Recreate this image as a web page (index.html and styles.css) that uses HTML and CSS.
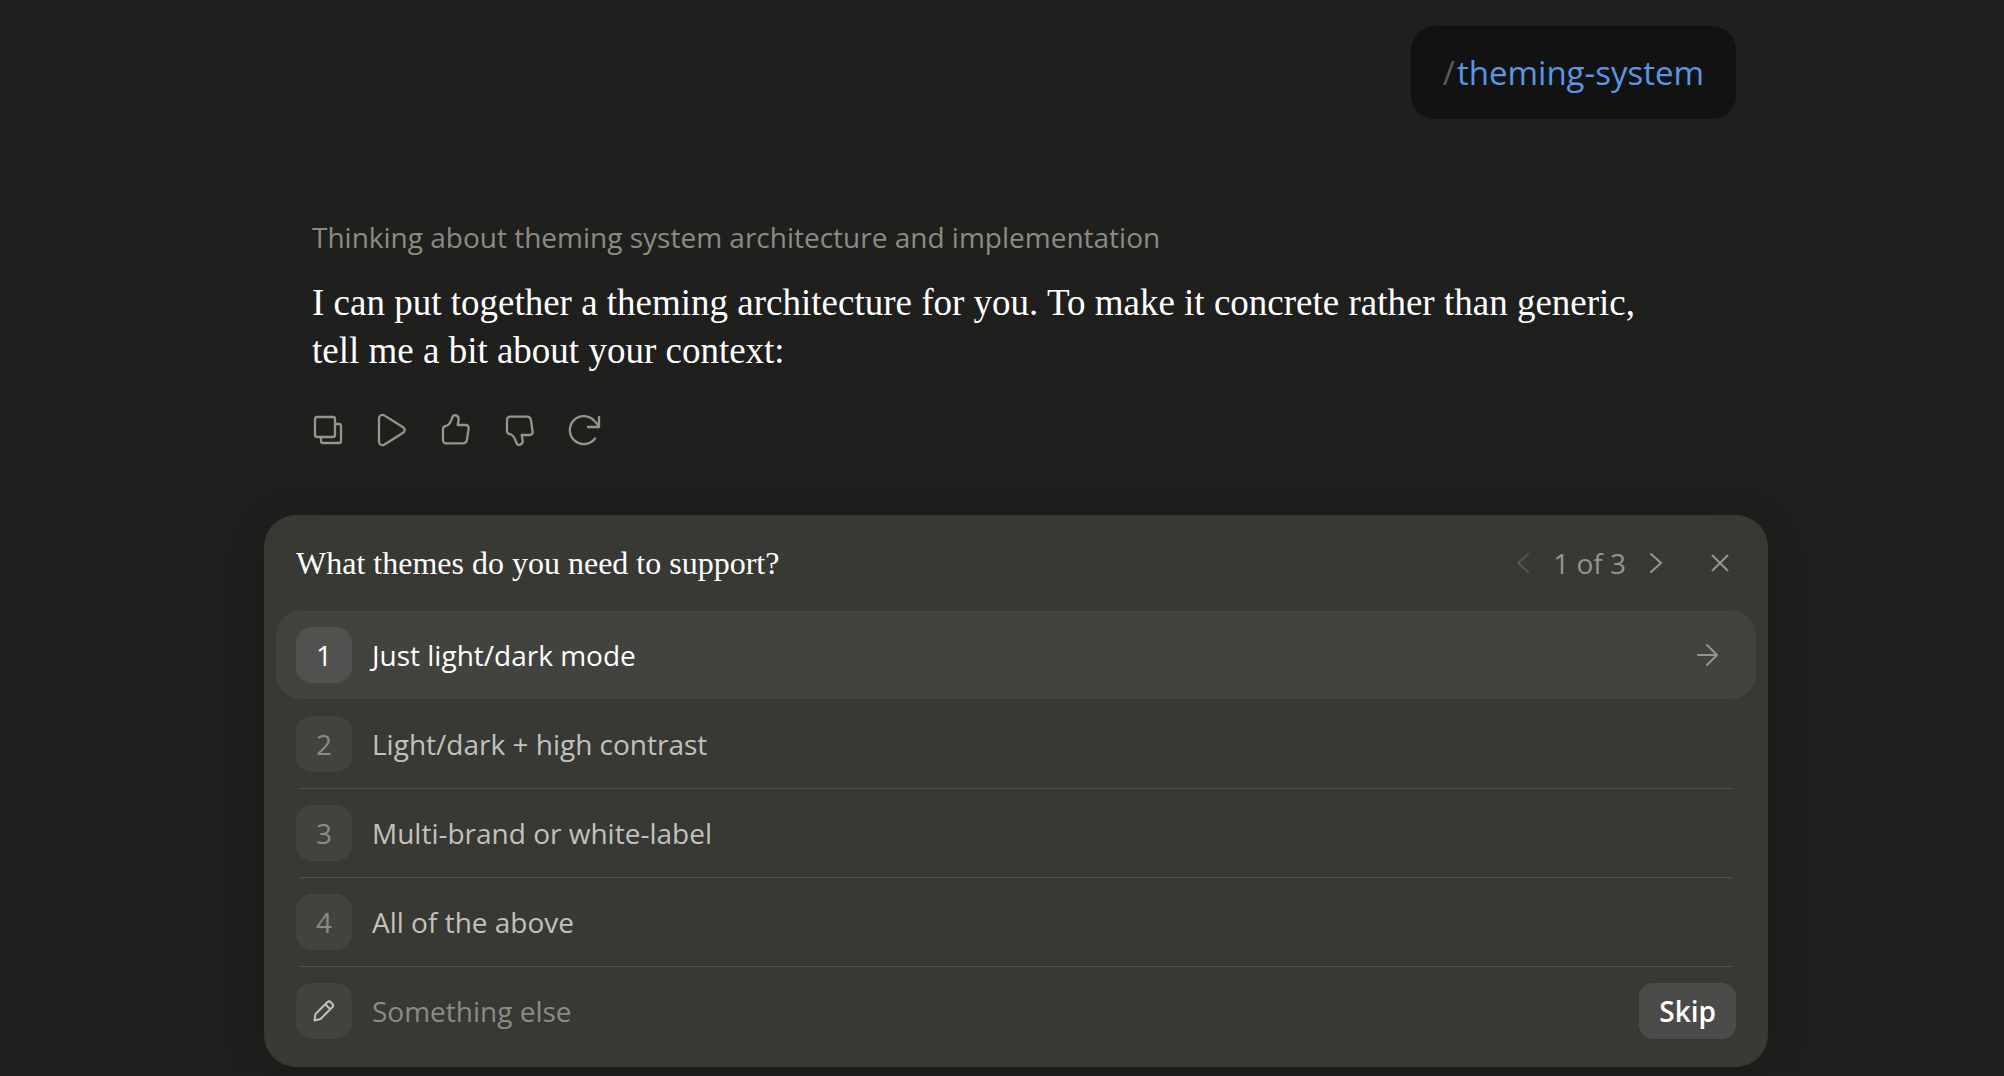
FILE: index.html
```html
<!doctype html>
<html lang="en">

<head>
<meta charset="utf-8" />
<meta name="viewport" content="width=device-width, initial-scale=1" />
<title>Theming system</title>
<link rel="stylesheet" href="styles.css">
</head>

<body>

<main class="chat">
	<div class="message-user"><span class="slash">/</span><span class="command">theming-system</span></div>

	<article class="message">
		<p class="thinking">Thinking about theming system architecture and implementation</p>
		<p class="answer">I can put together a theming architecture for you. To make it concrete rather than generic, tell me a bit about your context:</p>
		<div class="actions">
			<button type="button" aria-label="Copy">
				<svg class="icon" viewBox="0 0 32 32"><rect x="3" y="3" width="20" height="20" rx="2" /><path d="M23 10h4a2 2 0 0 1 2 2v15a2 2 0 0 1-2 2H11a2 2 0 0 1-2-2v-4" /></svg>
			</button>
			<button type="button" aria-label="Read aloud">
				<svg class="icon" viewBox="0 0 32 32"><path d="M3 4.500v23c0 3.400 3 4.500 5.600 2.900l18.500-11.600c2.200-1.500 2.200-4.100 0-5.600L8.600 1.600C6 0 3 1.100 3 4.500z" /></svg>
			</button>
			<button type="button" aria-label="Good response">
				<svg class="icon" viewBox="0 0 32 32"><path d="M3 15a3 3 0 0 1 3-3c4-1 5-5 6.500-9 .6-1.600 2-2.300 3.600-1.600C18.300 2.300 19 4 18.600 6l-.9 5h8c2 0 3.200 1.500 2.900 3.500l-1.600 11c-.4 2.300-1.700 3.800-4 3.800H6a3 3 0 0 1-3-3z" /></svg>
			</button>
			<button type="button" aria-label="Bad response">
				<svg class="icon" viewBox="0 0 32 32"><path transform="matrix(1 0 0 -1 0 32)" d="M3 15a3 3 0 0 1 3-3c4-1 5-5 6.500-9 .6-1.600 2-2.300 3.600-1.600C18.300 2.300 19 4 18.600 6l-.9 5h8c2 0 3.200 1.500 2.900 3.500l-1.600 11c-.4 2.300-1.700 3.800-4 3.800H6a3 3 0 0 1-3-3z" /></svg>
			</button>
			<button type="button" aria-label="Retry">
				<svg class="icon" viewBox="0 0 32 32"><path d="M27 24.500A14 14 0 1 1 26.500 7q3 3 4.500 6M31 3v10H20" /></svg>
			</button>
		</div>
	</article>

	<form class="card">
		<header class="card-header">
			<h2>What themes do you need to support?</h2>
			<nav class="pager">
				<button type="button" aria-label="Previous" disabled><svg class="icon-small" viewBox="0 0 24 24"><path d="M17 3L7 12l10 9" /></svg></button>
				<span>1 of 3</span>
				<button type="button" aria-label="Next"><svg class="icon-small" viewBox="0 0 24 24"><path d="M7 3l10 9-10 9" /></svg></button>
			</nav>
			<button type="button" class="close" aria-label="Close"><svg class="icon-small" viewBox="0 0 24 24"><path d="M4.500 4.500l15 15M19.500 4.500l-15 15" /></svg></button>
		</header>

		<ul class="options">
			<li><button type="button" class="option selected">
				<span class="key">1</span>
				<span class="label">Just light/dark mode</span>
				<svg class="icon-small" viewBox="0 0 24 24"><path d="M2 12h19M11 2l10 10-10 10" /></svg>
			</button></li>
			<li><button type="button" class="option"><span class="key">2</span><span class="label">Light/dark + high contrast</span></button></li>
			<li><button type="button" class="option"><span class="key">3</span><span class="label">Multi-brand or white-label</span></button></li>
			<li><button type="button" class="option"><span class="key">4</span><span class="label">All of the above</span></button></li>
			<li class="option other">
				<label class="key" for="other"><svg class="icon-small" viewBox="0 0 24 24"><path d="M2.500 21.500l1-6.500L15.500 3q1.500-1.300 3 0l2 2q1.400 1.500 0 3L8.500 20zM13.500 5.500l4.500 4.500" /></svg></label>
				<input id="other" type="text" placeholder="Something else" aria-label="Something else">
				<button type="submit" class="skip">Skip</button>
			</li>
		</ul>
	</form>
</main>

</body>

</html>
```

FILE: styles.css
```css
* {
	box-sizing: border-box;
	margin: 0;
	padding: 0;
}
body {
	background: #1f1f1e;
	color: #fff;
	font: 28px/40px "Open Sans", sans-serif;
	overflow: hidden;
}
button, input {
	border: 0;
	background: none;
	color: inherit;
	font: inherit;
}
button {
	cursor: pointer;
}
svg {
	display: block;
	fill: none;
	stroke: currentColor;
	stroke-width: 2;
	stroke-linecap: round;
	stroke-linejoin: round;
	overflow: visible;
}
.icon {
	width: 32px;
	height: 32px;
	stroke-width: 2.3;
}
.icon-small {
	width: 24px;
	height: 24px;
}

/* conversation */
.chat {
	display: flex;
	flex-direction: column;
	margin: 0 236px 0 264px;
	padding: 26px 0 8px;
}
.message-user {
	align-self: flex-end;
	margin-right: 32px;
	padding: 24px 32px;
	border-radius: 24px;
	background: #121212;
	font-size: 33px;
	line-height: 45px;
}
.slash {
	margin-right: 2px;
	color: #5c5b57;
}
.command {
	color: #5996e4;
}
.message {
	padding: 98px 104px 0 48px;
}
.thinking {
	color: #8c8b83;
}
.answer {
	margin-top: 22px;
	font: 37px/48px "Liberation Serif", serif;
}
.actions {
	display: flex;
	gap: 32px;
	margin-top: 39px;
	color: #96958c;
}

/* question card */
.card {
	margin-top: 69px;
	padding: 0 12px 12px;
	border-radius: 32px;
	background: #383834;
	box-shadow: 0 8px 40px rgba(0, 0, 0, .2);
}
.card-header {
	display: flex;
	align-items: center;
	height: 96px;
	padding: 0 24px 0 20px;
}
.card-header h2 {
	flex: 1;
	font: 32px/40px "Liberation Serif", serif;
}
.pager {
	display: flex;
	align-items: center;
	gap: 18px;
	color: #96958c;
}
.pager button:disabled {
	color: #565651;
}
.close {
	margin-left: 40px;
	color: #96958c;
}
.options {
	list-style: none;
}
.options li + li {
	margin-top: 1px;
}
.option {
	display: flex;
	align-items: center;
	gap: 20px;
	width: 100%;
	height: 88px;
	padding: 0 20px;
	border-radius: 24px;
	color: #c3c2b8;
	text-align: left;
}
.option .label {
	flex: 1;
}
.key {
	display: flex;
	align-items: center;
	justify-content: center;
	width: 56px;
	height: 56px;
	border-radius: 16px;
	background: #42423e;
	color: #8c8b83;
}
.selected {
	padding-right: 36px;
	background: #42423e;
	color: #fff;
}
.selected .key {
	background: #51514f;
	color: #fff;
}
.selected svg {
	color: #96958c;
}
/* the rule between two rows is inset from the row */
li:not(:first-child):not(:last-child)::after {
	content: "";
	display: block;
	height: 1px;
	margin: 0 24px -1px;
	background: #51514c;
}
.other .key {
	color: #c3c2b8;
}
.other input {
	flex: 1;
	min-width: 0;
	height: 56px;
	outline: 0;
}
.other input::placeholder {
	color: #8c8b83;
	opacity: 1;
}
.skip {
	height: 56px;
	padding: 0 20px;
	border-radius: 14px;
	background: #4b4b49;
	color: #fff;
	font-weight: 600;
}
```
